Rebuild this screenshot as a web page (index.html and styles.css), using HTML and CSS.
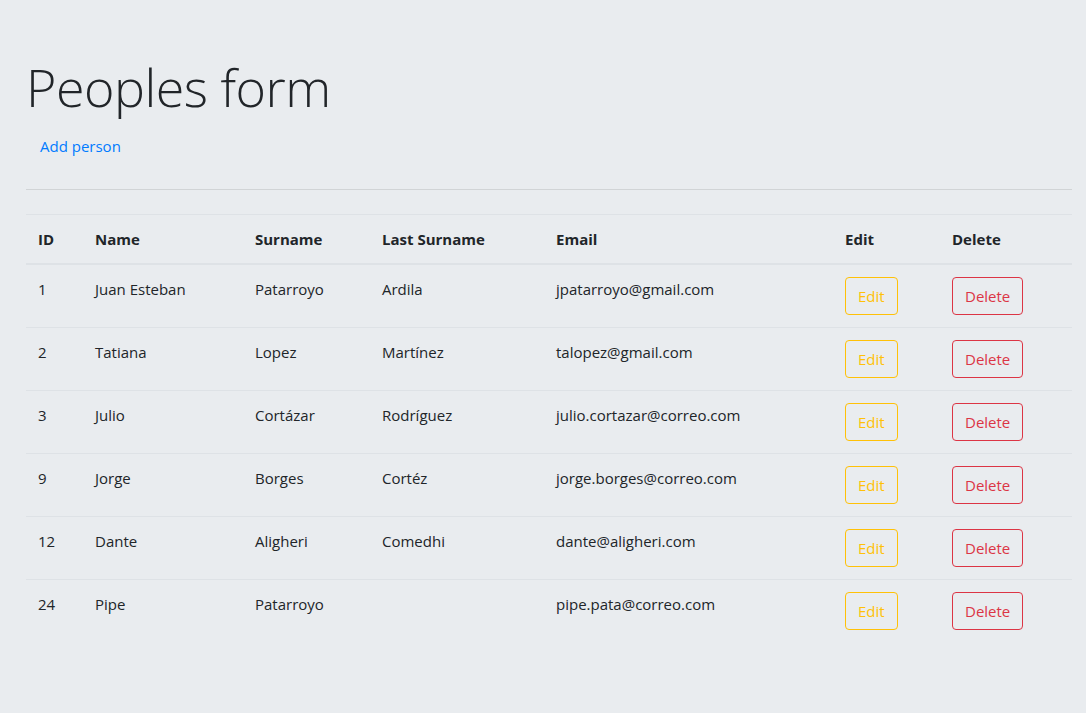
FILE: index.html
```html
<!DOCTYPE html>
<html lang="en">
<head>
<meta charset="utf-8">
<title>Peoples form</title>
<link rel="stylesheet" href="styles.css">
</head>
<body>
<main class="jumbotron">
  <h1 class="title">Peoples form</h1>
  <div class="actions"><a class="btn btn-link" href="#">Add person</a></div>
  <hr class="divider">
  <table class="table">
    <colgroup>
      <col class="c-id"><col class="c-name"><col class="c-surname"><col class="c-last"><col class="c-email"><col class="c-edit"><col class="c-delete">
    </colgroup>
    <thead>
      <tr><th>ID</th><th>Name</th><th>Surname</th><th>Last Surname</th><th>Email</th><th>Edit</th><th>Delete</th></tr>
    </thead>
    <tbody>
      <tr><td>1</td><td>Juan Esteban</td><td>Patarroyo</td><td>Ardila</td><td>jpatarroyo@gmail.com</td><td><button class="btn btn-warn">Edit</button></td><td><button class="btn btn-danger">Delete</button></td></tr>
      <tr><td>2</td><td>Tatiana</td><td>Lopez</td><td>Martínez</td><td>talopez@gmail.com</td><td><button class="btn btn-warn">Edit</button></td><td><button class="btn btn-danger">Delete</button></td></tr>
      <tr><td>3</td><td>Julio</td><td>Cortázar</td><td>Rodríguez</td><td>julio.cortazar@correo.com</td><td><button class="btn btn-warn">Edit</button></td><td><button class="btn btn-danger">Delete</button></td></tr>
      <tr><td>9</td><td>Jorge</td><td>Borges</td><td>Cortéz</td><td>jorge.borges@correo.com</td><td><button class="btn btn-warn">Edit</button></td><td><button class="btn btn-danger">Delete</button></td></tr>
      <tr><td>12</td><td>Dante</td><td>Aligheri</td><td>Comedhi</td><td>dante@aligheri.com</td><td><button class="btn btn-warn">Edit</button></td><td><button class="btn btn-danger">Delete</button></td></tr>
      <tr><td>24</td><td>Pipe</td><td>Patarroyo</td><td></td><td>pipe.pata@correo.com</td><td><button class="btn btn-warn">Edit</button></td><td><button class="btn btn-danger">Delete</button></td></tr>
    </tbody>
  </table>
</main>
</body>
</html>
```

FILE: styles.css
```css
html, body {
  margin: 0;
  background: #e9ecef;
}
body {
  font-family: "Open Sans", "Noto Sans", sans-serif;
  font-size: 15px;
  line-height: 24px;
  color: #212529;
}
.jumbotron {
  padding: 53px 14px 40px 26px;
}
.title {
  margin: 0 0 7px 0;
  font-size: 52px;
  font-weight: 300;
  line-height: 67px;
  letter-spacing: -0.5px;
}
.actions {
  display: flex;
}
.btn {
  display: inline-block;
  box-sizing: border-box;
  height: 38px;
  padding: 6px 12px;
  font-family: inherit;
  font-size: 15px;
  line-height: 24px;
  border: 1px solid transparent;
  border-radius: 4px;
  background: transparent;
  text-decoration: none;
  cursor: pointer;
}
.btn-link {
  color: #007bff;
  padding-left: 13px;
}
.btn-warn {
  color: #ffc107;
  border-color: #ffc107;
}
.btn-danger {
  color: #dc3545;
  border-color: #dc3545;
}
.divider {
  margin: 24px 0 24px 0;
  border: 0;
  border-top: 1px solid rgba(0, 0, 0, 0.1);
}
.table {
  width: 100%;
  table-layout: fixed;
  border-collapse: collapse;
}
.c-id { width: 57px; }
.c-name { width: 160px; }
.c-surname { width: 127px; }
.c-last { width: 174px; }
.c-email { width: 289px; }
.c-edit { width: 107px; }
.c-delete { width: 132px; }
.table th, .table td {
  padding: 12px;
  text-align: left;
  vertical-align: top;
  border-top: 1px solid #dee2e6;
  white-space: nowrap;
}
.table th {
  font-weight: 700;
  border-bottom: 2px solid #dee2e6;
}
.table tbody tr:first-child td {
  border-top: 0;
}
```
